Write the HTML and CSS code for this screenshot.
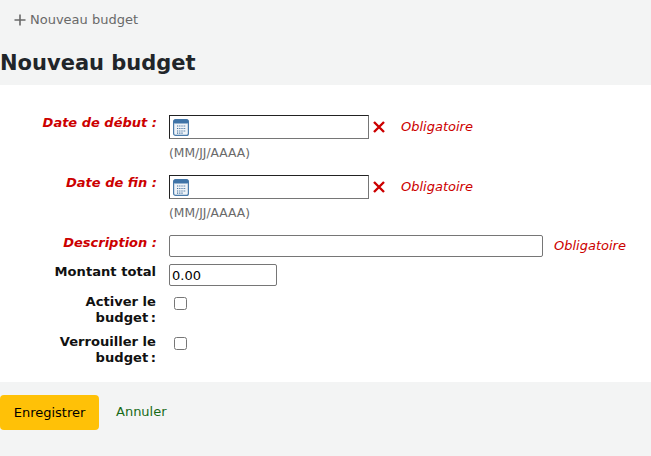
FILE: index.html
```html
<!DOCTYPE html>
<html lang="fr">
<head>
  <meta charset="UTF-8">
  <meta name="viewport" content="width=device-width, initial-scale=1.0">
  <title>Nouveau budget</title>
  <link rel="stylesheet" href="styles.css">
</head>
<body>
  <div class="toolbar">
    <a class="new-link" href="#">
      <svg class="plus-icon" width="12" height="12" viewBox="0 0 12 12"><path d="M6 0.500v11M0.500 6h11" stroke="#696969" stroke-width="1.600" fill="none"/></svg>
      Nouveau budget
    </a>
  </div>
  <h1>Nouveau budget</h1>
  <form class="panel">
    <div class="row row-date">
      <label class="field-label required">Date de début :</label>
      <div class="field">
        <div class="date-line">
          <span class="date-input">
            <svg class="cal-icon" width="16" height="17" viewBox="0 0 16 17">
              <rect x="0.600" y="0.600" width="14.800" height="15.800" rx="2" fill="#eef3f8" stroke="#4a7bab" stroke-width="1.200"/>
              <rect x="0.600" y="0.600" width="14.800" height="4" rx="1.500" fill="#3f74a8"/>
              <path d="M4 7h9M4 9.500h9M4 12h9M4 14.200h6" stroke="#41719f" stroke-width="1.200" stroke-dasharray="1.200 1"/>
            </svg>
          </span>
          <svg class="clear-icon" width="12" height="12" viewBox="0 0 12 12"><path d="M1 1l10 10M11 1L1 11" stroke="#cc0000" stroke-width="2.400" fill="none"/></svg>
          <span class="required-note">Obligatoire</span>
        </div>
        <div class="hint">(MM/JJ/AAAA)</div>
      </div>
    </div>
    <div class="row row-date">
      <label class="field-label required">Date de fin :</label>
      <div class="field">
        <div class="date-line">
          <span class="date-input">
            <svg class="cal-icon" width="16" height="17" viewBox="0 0 16 17">
              <rect x="0.600" y="0.600" width="14.800" height="15.800" rx="2" fill="#eef3f8" stroke="#4a7bab" stroke-width="1.200"/>
              <rect x="0.600" y="0.600" width="14.800" height="4" rx="1.500" fill="#3f74a8"/>
              <path d="M4 7h9M4 9.500h9M4 12h9M4 14.200h6" stroke="#41719f" stroke-width="1.200" stroke-dasharray="1.200 1"/>
            </svg>
          </span>
          <svg class="clear-icon" width="12" height="12" viewBox="0 0 12 12"><path d="M1 1l10 10M11 1L1 11" stroke="#cc0000" stroke-width="2.400" fill="none"/></svg>
          <span class="required-note">Obligatoire</span>
        </div>
        <div class="hint">(MM/JJ/AAAA)</div>
      </div>
    </div>
    <div class="row row-desc">
      <label class="field-label required">Description :</label>
      <div class="field field-line">
        <input class="text-input desc-input" type="text">
        <span class="required-note">Obligatoire</span>
      </div>
    </div>
    <div class="row row-amount">
      <label class="field-label plain">Montant total</label>
      <div class="field">
        <input class="text-input amount-input" type="text" value="0.00">
      </div>
    </div>
    <div class="row row-check">
      <label class="field-label plain">Activer le budget&#8239;:</label>
      <div class="field"><input class="check" type="checkbox"></div>
    </div>
    <div class="row row-check">
      <label class="field-label plain">Verrouiller le budget&#8239;:</label>
      <div class="field"><input class="check" type="checkbox"></div>
    </div>
  </form>
  <div class="actions">
    <button class="save-btn" type="button">Enregistrer</button>
    <a class="cancel-link" href="#">Annuler</a>
  </div>
</body>
</html>
```

FILE: styles.css
```css
html, body {
  height: 100%;
}
body {
  margin: 0;
  background-color: #f3f4f4;
  font-family: "DejaVu Sans", sans-serif;
  font-size: 13px;
  color: #000;
  overflow: hidden;
}
a {
  text-decoration: none;
}
.toolbar {
  height: 39px;
  padding-left: 14px;
  display: flex;
  align-items: center;
}
.new-link {
  display: flex;
  align-items: center;
  gap: 4px;
  color: #696969;
}
h1 {
  margin: 0;
  height: 46px;
  padding-top: 11px;
  box-sizing: border-box;
  font-size: 21px;
  line-height: 26px;
  font-weight: bold;
  color: #212529;
}
.panel {
  background-color: #fff;
  height: 297px;
  box-sizing: border-box;
  padding-top: 30px;
}
.row {
  display: flex;
}
.field-label {
  width: 125px;
  flex: none;
  margin-left: 32px;
  margin-right: 12px;
  text-align: right;
  font-weight: bold;
  line-height: 16px;
  color: #111;
}
.field-label.plain {
  width: 126px;
  margin-left: 30px;
  margin-right: 13px;
  font-size: 13.100px;
}
.field-label.required {
  color: #cc0000;
  font-style: italic;
}
.row-date {
  height: 60px;
}
.date-line {
  display: flex;
  align-items: center;
  height: 24px;
}
.date-input {
  width: 200px;
  height: 24px;
  box-sizing: border-box;
  border: 1px solid;
  border-color: #222 #767676 #767676 #222;
  display: flex;
  align-items: center;
  padding-left: 3px;
}
.clear-icon {
  margin-left: 4px;
}
.required-note {
  margin-left: 16px;
  position: relative;
  top: -1px;
  color: #cc0000;
  font-style: italic;
  white-space: nowrap;
}
.hint {
  margin-top: 7px;
  font-size: 12.300px;
  line-height: 14px;
  color: #696969;
}
.field-line {
  display: flex;
  align-items: center;
  height: 22px;
}
.field-line .required-note {
  margin-left: 11px;
}
.text-input {
  box-sizing: border-box;
  height: 22px;
  margin: 0;
  padding: 1px 2px;
  border: 1px solid #767676;
  border-radius: 2px;
  font-family: "DejaVu Sans", sans-serif;
  font-size: 13px;
  background: #fff;
  color: #000;
}
.desc-input {
  width: 374px;
}
.amount-input {
  width: 108px;
}
.row-desc {
  height: 29px;
}
.row-amount {
  height: 31px;
}
.row-check {
  height: 40px;
}
.row-check .field-label {
  margin-top: -1px;
  line-height: 15.600px;
}
.check {
  margin: 2px 0 0 5px;
  width: 13px;
  height: 13px;
}
.actions {
  padding-top: 13px;
  display: flex;
  align-items: flex-start;
}
.save-btn {
  width: 99px;
  height: 35px;
  padding: 0;
  border: none;
  border-radius: 4px;
  background-color: #ffc107;
  color: #000;
  font-family: "DejaVu Sans", sans-serif;
  font-size: 13px;
}
.cancel-link {
  margin-left: 17px;
  margin-top: 9px;
  color: #176a17;
}
```
